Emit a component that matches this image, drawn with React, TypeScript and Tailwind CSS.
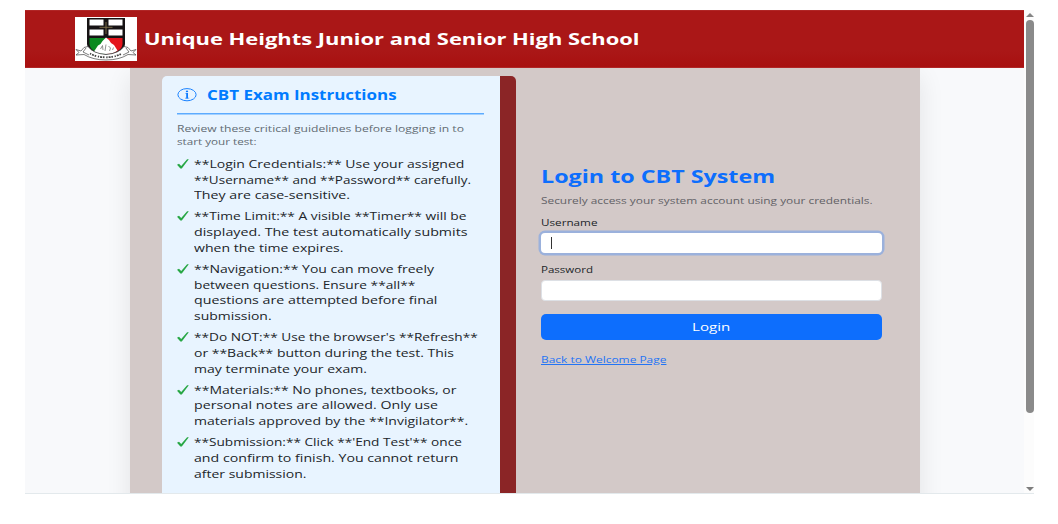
import { useLayoutEffect, useRef } from "react";

type FitProps = { text: string; width: number; className?: string; textClass?: string };

/* One line of text, stretched horizontally to the given width. */
function Fit({ text, width, className = "", textClass = "" }: FitProps) {
  const ref = useRef<HTMLSpanElement>(null);
  useLayoutEffect(() => {
    const el = ref.current;
    if (el) el.style.transform = `scaleX(${width / el.offsetWidth})`;
  }, [text, width]);
  return (
    <span className={`block whitespace-nowrap ${className}`} style={{ width }}>
      <span ref={ref} className={`inline-block origin-left ${textClass}`}>
        {text}
      </span>
    </span>
  );
}

const rules: [string, number][][] = [
  [
    ["**Login Credentials:** Use your assigned", 270],
    ["**Username** and **Password** carefully.", 276.5],
    ["They are case-sensitive.", 155.5],
  ],
  [
    ["**Time Limit:** A visible **Timer** will be", 272],
    ["displayed. The test automatically submits", 273.5],
    ["when the time expires.", 150],
  ],
  [
    ["**Navigation:** You can move freely", 240],
    ["between questions. Ensure **all**", 222],
    ["questions are attempted before final", 243.5],
    ["submission.", 77],
  ],
  [
    ["**Do NOT:** Use the browser's **Refresh**", 283.5],
    ["or **Back** button during the test. This", 260],
    ["may terminate your exam.", 173.5],
  ],
  [
    ["**Materials:** No phones, textbooks, or", 262.5],
    ["personal notes are allowed. Only use", 244.5],
    ["materials approved by the **Invigilator**.", 274],
  ],
  [
    ["**Submission:** Click **'End Test'** once", 268],
    ["and confirm to finish. You cannot return", 265],
    ["after submission.", 112.5],
  ],
];

function Crest() {
  return (
    <svg width="62" height="44" viewBox="0 0 62 44" className="shrink-0">
      <rect width="62" height="44" fill="#fff" />
      <path d="M12 1H50V27Q49 37 31 38Q13 37 12 27Z" fill="#171314" />
      <path d="M14.500 21H30V37Q15 35 14.500 27Z" fill="#0b8a20" />
      <path d="M32 21H47.500V27Q47 35 32 37Z" fill="#e4141c" />
      <path d="M14.500 2.500H28.500V8.500H14.500ZM33.500 2.500H47.500V8.500H33.500ZM14.500 12.500H28.500V18.500H14.500ZM33.500 12.500H47.500V18.500H33.500Z" fill="#fff" />
      <path d="M31 5V17M24.500 10.300H37.500" stroke="#81724c" strokeWidth="0.9" />
      <path d="M19 34.500L23 28.500L25.500 27L27.500 24L31 20.500L34 23L36 26L39 28L42.500 33.500Q38 37 31 37Q23 37 19 34.500Z" fill="#fff" />
      <path d="M25.500 32L27.500 28.500L28 33M31 27.500L30 34M33.500 29L35.500 31L34.500 34M37.500 33L38.500 30.500" stroke="#777" strokeWidth="0.8" fill="none" />
      <path d="M1 32.500L6 34L9 30.500L13 29.500Q18 36.500 31 37.500Q44 36.500 49 29.500L53 30.500L56 34L61 32.500L58 35.500L61 38L53 37.500Q44 43 31 43Q18 43 9 37.500L1 38L4 35.500Z" fill="#fff" stroke="#444" strokeWidth="0.7" />
      <path d="M11 31L8 35L14 38M51 31L54 35L48 38" stroke="#444" strokeWidth="0.7" fill="none" />
      <path d="M15 36.500Q22 40.300 31 40.300Q40 40.300 47 36.500" stroke="#444" strokeWidth="1.800" strokeDasharray="1.3 1 2 0.8 1.6 1.700" fill="none" />
    </svg>
  );
}

function Check() {
  return (
    <svg width="12" height="10" viewBox="0 0 12 10" className="mt-[2px] shrink-0">
      <path d="M0 5.700L2 4.700L4.200 7.100L10.100 0.300H11.800L4.800 9.400H3.400Z" fill="#28a745" />
    </svg>
  );
}

function Instructions() {
  return (
    <section className="mt-[7.500px] h-[460px] w-[353.500px] shrink-0 rounded-t-[5px] border-r-[16px] border-[#8b2526] bg-[#e8f4ff] pl-[15px] pt-[8px]">
      <div className="flex h-[22px] items-center">
        <svg width="20" height="14" viewBox="0 0 20 14" className="mr-[10px] shrink-0">
          <ellipse cx="10" cy="6.700" rx="9.100" ry="6.100" fill="none" stroke="#1a82ff" strokeWidth="1" />
          <path d="M8.300 5.400H10.500M8 10.200H12.200" stroke="#3d96ff" strokeWidth="0.7" fill="none" />
          <path d="M10.100 5.100V10.400" stroke="#0d7bff" strokeWidth="1.800" />
          <ellipse cx="10" cy="3.400" rx="1.200" ry="0.800" fill="#0d7bff" />
        </svg>
        <Fit text="CBT Exam Instructions" width={190} className="text-[14px] font-bold leading-[20px] text-[#007bff]" />
      </div>
      <svg width="307" height="2" className="mt-[7px] block">
        <rect width="307" height="1.500" fill="#5dabff" />
      </svg>
      <div className="mt-[7.500px] text-[9.200px] leading-[13.200px] text-[#626b73]">
        <Fit text="Review these critical guidelines before logging in to" width={287.5} />
        <Fit text="start your test:" width={80} />
      </div>
      <ul className="mt-[8.500px] flex flex-col gap-[5.250px]">
        {rules.map((lines) => (
          <li key={lines[0][0]} className="flex gap-[4.500px]">
            <Check />
            <div className="text-[10.700px] leading-[15.750px] text-[#212529]">
              {lines.map(([text, width]) => (
                <Fit key={text} text={text} width={width} />
              ))}
            </div>
          </li>
        ))}
      </ul>
    </section>
  );
}

function LoginForm() {
  return (
    <form className="ml-[25px] mt-[96px] w-[341px]" onSubmit={(e) => e.preventDefault()}>
      <Fit text="Login to CBT System" width={234} className="text-[18px] font-bold leading-[24px] text-[#0d6efd]" />
      <Fit text="Securely access your system account using your credentials." width={331} className="mt-[6px] text-[9.200px] leading-[14px] text-[#626166]" />
      <Fit text="Username" width={56} className="mt-[8px] text-[9.200px] font-medium leading-[14px] text-[#212529]" />
      <div className="mt-[3px] flex h-[20px] items-center rounded-[4px] bg-white pl-[10px] shadow-[0_0_0_2.500px_#9bb1dc]">
        <span className="h-[12px] w-px bg-[#333]" />
      </div>
      <Fit text="Password" width={51.5} className="mt-[9.500px] text-[9.200px] font-medium leading-[14px] text-[#212529]" />
      <div className="mt-[3px] h-[21px] rounded-[4px] border border-[#dde0e5] bg-white" />
      <button type="submit" className="mt-[13px] flex h-[26px] w-full items-center justify-center rounded-[5px] bg-[#0d6efd] text-white">
        <Fit text="Login" width={38.5} className="text-left text-[11px] font-medium leading-[16px]" />
      </button>
      <a href="#" className="mt-[13px] block text-[9.200px] leading-[14px] text-[#2374f5]">
        <Fit text="Back to Welcome Page" width={126} textClass="underline" />
      </a>
    </form>
  );
}

export default function App() {
  return (
    <div className="h-[524px] w-[1058px] overflow-hidden bg-white pl-[25px] pt-[10px] font-['Open_Sans','Noto_Sans',sans-serif]">
      <div className="flex h-[484px] w-[1009px] overflow-hidden border-b border-[#e3e9ec]">
        <div className="flex w-[999px] shrink-0 flex-col bg-[#f8f9fb]">
          <header className="z-10 flex h-[58px] shrink-0 items-center border-y border-[#b02626] bg-linear-to-b from-[#aa1717] from-70% to-[#a81010] pl-[50px]">
            <Crest />
            <Fit text="Unique Heights Junior and Senior High School" width={495.5} className="ml-[6.500px] text-[16px] font-bold leading-[24px] text-white" />
          </header>
          <main className="ml-[105px] flex h-[460px] w-[790px] shrink-0 bg-[#d3c9c8] pl-[32px] shadow-[0_8px_24px_rgba(0,0,0,0.09)]">
            <Instructions />
            <LoginForm />
          </main>
        </div>
        <div className="flex w-[10px] flex-col items-center bg-[#fcfcfc] pl-[2px]">
          <svg width="8" height="4" viewBox="0 0 8 4" className="mt-[3px] shrink-0">
            <path d="M0 4L4 0L8 4Z" fill="#858585" />
          </svg>
          <div className="mt-[3px] h-[393px] w-[8px] shrink-0 rounded-[4px] bg-[#8a8a8a]" />
          <svg width="8" height="4" viewBox="0 0 8 4" className="mb-[2px] mt-auto shrink-0">
            <path d="M0 0L4 4L8 0Z" fill="#7d7d7d" />
          </svg>
        </div>
      </div>
    </div>
  );
}
